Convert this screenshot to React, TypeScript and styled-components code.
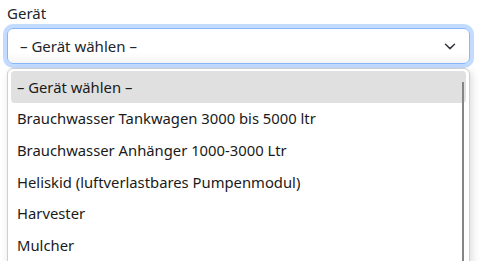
import React from 'react';
import styled, { createGlobalStyle } from 'styled-components';

const options = [
  '– Gerät wählen –',
  'Brauchwasser Tankwagen 3000 bis 5000 ltr',
  'Brauchwasser Anhänger 1000-3000 Ltr',
  'Heliskid (luftverlastbares Pumpenmodul)',
  'Harvester',
  'Mulcher',
];

const GlobalStyle = createGlobalStyle`
  html, body {
    margin: 0;
    padding: 0;
    height: 100%;
    background: #fff;
  }
  html {
    overflow: hidden;
  }
  body {
    font-family: "Noto Sans", "Open Sans", sans-serif;
    color: #212529;
  }
`;

export default function App() {
  return (
    <>
      <GlobalStyle />
      <Page>
        <Label>Gerät</Label>
        <Field>
          <Select>
            <SelectText>{options[0]}</SelectText>
            <Chevron viewBox="0 0 12 7" width={12} height={7}>
              <path d="M1.5 1.2 6 5.6 10.5 1.2" fill="none" stroke="#343a40" strokeWidth="1.5" strokeLinecap="round" strokeLinejoin="round" />
            </Chevron>
          </Select>
          <Menu>
            {options.map((o, i) => (
              <Option key={o} $active={i === 0}>{o}</Option>
            ))}
            <Scrollbar />
          </Menu>
        </Field>
      </Page>
    </>
  );
}

const Page = styled.div`
  padding: 3px 11px 0 7px;
  display: flex;
  flex-direction: column;
  gap: 6px;
`;

const Label = styled.label`
  font-size: 15px;
  line-height: 18px;
  padding-top: 1px;
`;

const Field = styled.div`
  position: relative;
`;

const Select = styled.div`
  height: 36px;
  box-sizing: border-box;
  border: 1px solid #86b7fe;
  border-radius: 6px;
  box-shadow: 0 0 0 4px rgba(13, 110, 253, 0.25);
  background: linear-gradient(#fff 70%, #f4f4f4);
  display: flex;
  align-items: center;
  justify-content: space-between;
  padding: 0 13px 0 12px;
`;

const SelectText = styled.span`
  font-size: 15px;
`;

const Chevron = styled.svg`
  display: block;
`;

const Menu = styled.div`
  position: absolute;
  top: 40px;
  left: 0;
  right: 0;
  height: 260px;
  box-sizing: border-box;
  background: #fff;
  border: 1px solid #cfcfcf;
  border-radius: 6px;
  box-shadow: 2px 3px 8px rgba(0, 0, 0, 0.14);
  padding: 2px 3px;
  z-index: 2;
`;

const Option = styled.div<{ $active?: boolean }>`
  height: 31.6px;
  display: flex;
  align-items: center;
  padding: 0 6px;
  border-radius: 4px;
  font-size: 14.8px;
  color: #1a1a1a;
  background: ${p => (p.$active ? '#e0e0e0' : 'transparent')};
`;

const Scrollbar = styled.div`
  position: absolute;
  top: 13px;
  right: 5px;
  width: 2px;
  bottom: 0;
  background: #858585;
`;
